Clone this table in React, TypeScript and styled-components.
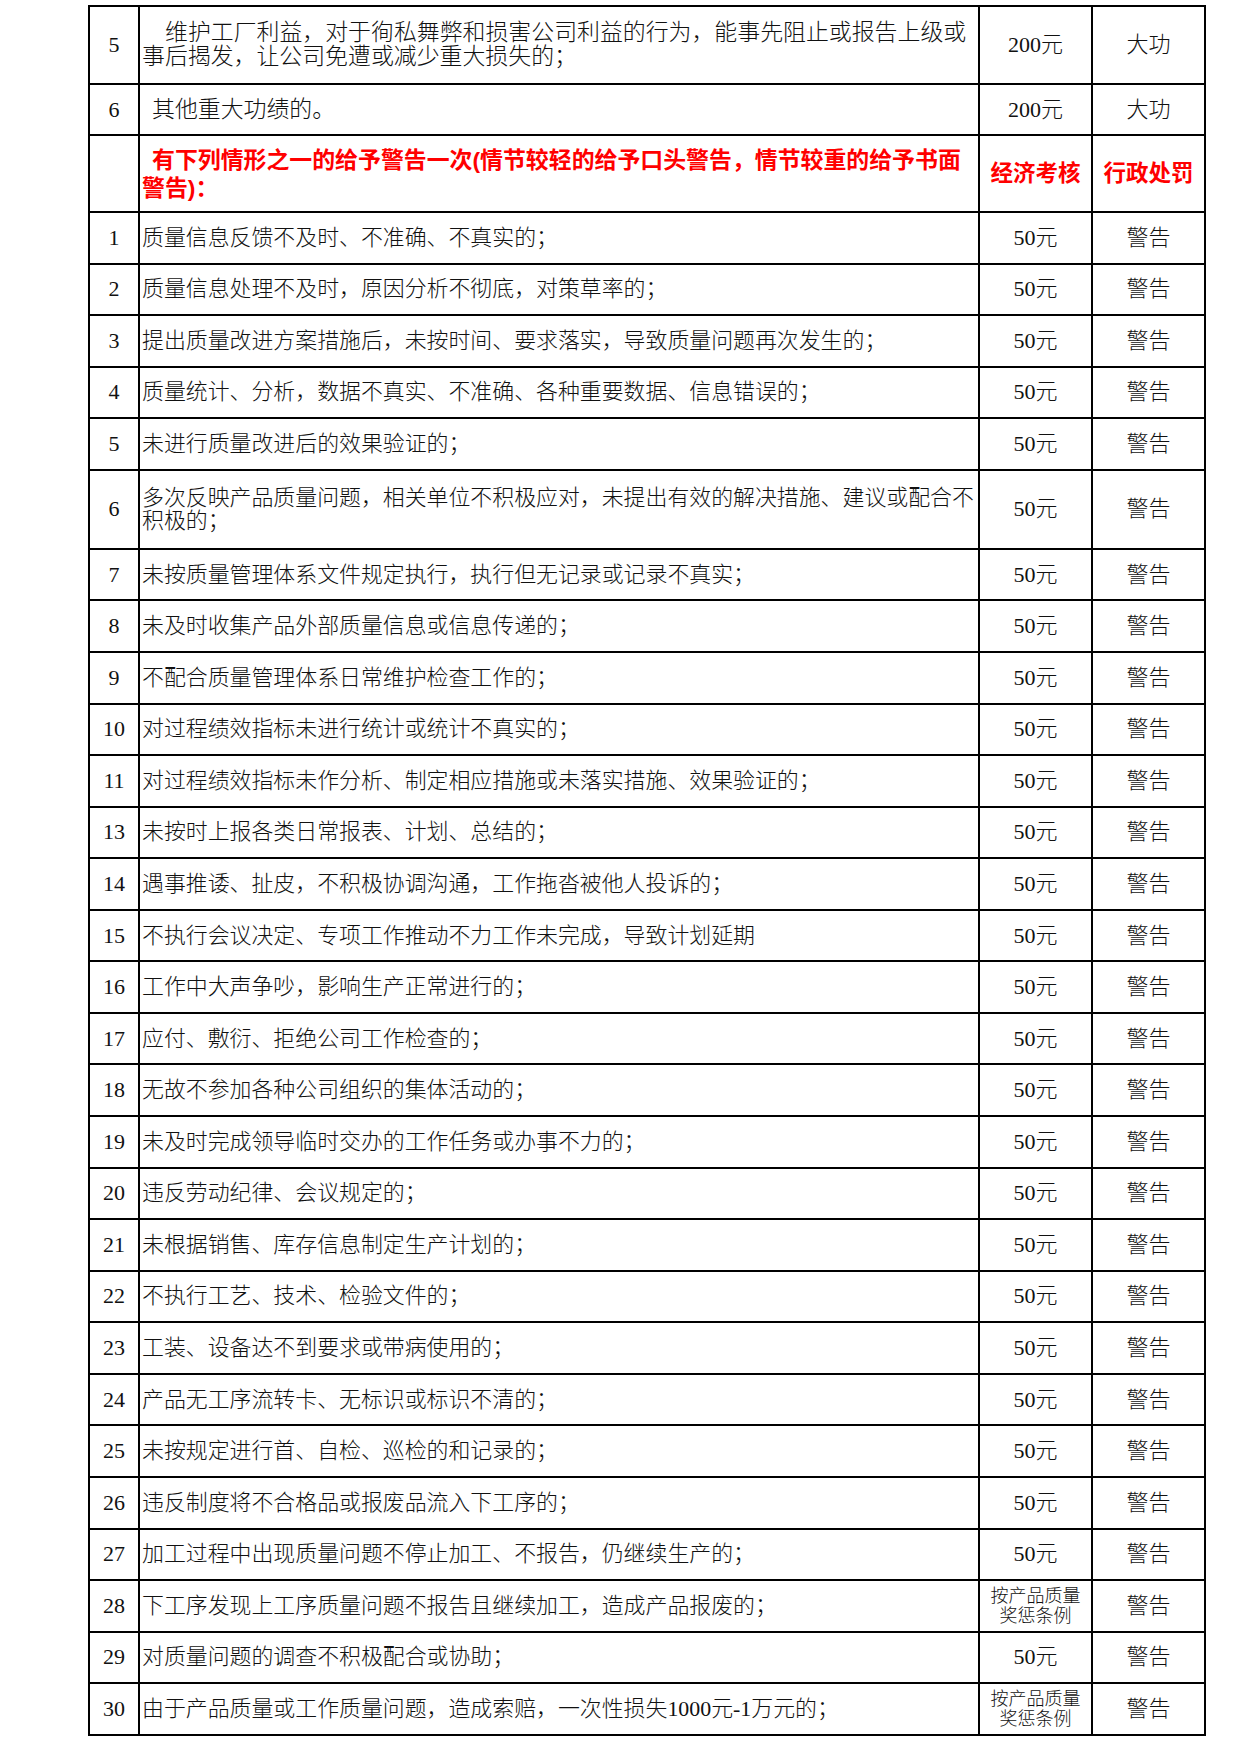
import React from "react";
import styled, { createGlobalStyle } from "styled-components";

const GlobalStyle = createGlobalStyle`
  html, body {
    margin: 0;
    padding: 0;
    background: #ffffff;
  }
  body {
    font-family: "Liberation Serif", "Noto Sans CJK SC", serif;
    color: #111111;
  }
`;

const Page = styled.div`
  padding: 5px 0 0 88px;
`;

const Sheet = styled.table`
  border-collapse: collapse;
  table-layout: fixed;
  width: 1116px;
`;

const Row = styled.tr<{ $h: number }>`
  height: ${(p) => p.$h}px;
`;

const Cell = styled.td`
  border: 2px solid #000000;
  padding: 0;
  vertical-align: middle;
  overflow: hidden;
`;

const NumCell = styled(Cell)`
  text-align: center;
  font-family: "Liberation Serif", "Noto Sans CJK SC", serif;
  font-size: 22px;
  color: #111111;
`;

const TextCell = styled(Cell)<{
  $size?: number;
  $indent?: number;
  $lh?: number;
  $red?: boolean;
}>`
  padding: 0 0 0 2px;
  white-space: nowrap;
  text-align: left;
  font-family: ${(p) =>
    p.$red
      ? `"Liberation Sans", "Noto Sans CJK SC", sans-serif`
      : `"Liberation Serif", "Noto Sans CJK SC", serif`};
  font-weight: ${(p) => (p.$red ? 700 : 300)};
  font-size: ${(p) => p.$size ?? 21.9}px;
  line-height: ${(p) => p.$lh ?? 24}px;
  text-indent: ${(p) => p.$indent ?? 0}px;
  color: ${(p) => (p.$red ? "#ff0000" : "#111111")};
`;

const NextLine = styled.span`
  display: inline-block;
  text-indent: 0;
`;

const CenterCell = styled(Cell)<{ $red?: boolean; $small?: boolean }>`
  text-align: center;
  white-space: nowrap;
  font-family: ${(p) =>
    p.$red
      ? `"Liberation Sans", "Noto Sans CJK SC", sans-serif`
      : `"Liberation Serif", "Noto Sans CJK SC", serif`};
  font-weight: ${(p) => (p.$red ? 700 : 300)};
  font-size: ${(p) => (p.$red ? 22.5 : p.$small ? 18 : 22)}px;
  line-height: ${(p) => (p.$small ? 20 : 26)}px;
  color: ${(p) => (p.$red ? "#ff0000" : "#111111")};
`;

type Item = {
  no: string;
  lines: string[];
  amount?: string[];
  tall?: boolean;
};

const items: Item[] = [
  { no: "1", lines: ["质量信息反馈不及时、不准确、不真实的；"] },
  { no: "2", lines: ["质量信息处理不及时，原因分析不彻底，对策草率的；"] },
  { no: "3", lines: ["提出质量改进方案措施后，未按时间、要求落实，导致质量问题再次发生的；"] },
  { no: "4", lines: ["质量统计、分析，数据不真实、不准确、各种重要数据、信息错误的；"] },
  { no: "5", lines: ["未进行质量改进后的效果验证的；"] },
  {
    no: "6",
    lines: ["多次反映产品质量问题，相关单位不积极应对，未提出有效的解决措施、建议或配合不", "积极的；"],
    tall: true,
  },
  { no: "7", lines: ["未按质量管理体系文件规定执行，执行但无记录或记录不真实；"] },
  { no: "8", lines: ["未及时收集产品外部质量信息或信息传递的；"] },
  { no: "9", lines: ["不配合质量管理体系日常维护检查工作的；"] },
  { no: "10", lines: ["对过程绩效指标未进行统计或统计不真实的；"] },
  { no: "11", lines: ["对过程绩效指标未作分析、制定相应措施或未落实措施、效果验证的；"] },
  { no: "13", lines: ["未按时上报各类日常报表、计划、总结的；"] },
  { no: "14", lines: ["遇事推诿、扯皮，不积极协调沟通，工作拖沓被他人投诉的；"] },
  { no: "15", lines: ["不执行会议决定、专项工作推动不力工作未完成，导致计划延期"] },
  { no: "16", lines: ["工作中大声争吵，影响生产正常进行的；"] },
  { no: "17", lines: ["应付、敷衍、拒绝公司工作检查的；"] },
  { no: "18", lines: ["无故不参加各种公司组织的集体活动的；"] },
  { no: "19", lines: ["未及时完成领导临时交办的工作任务或办事不力的；"] },
  { no: "20", lines: ["违反劳动纪律、会议规定的；"] },
  { no: "21", lines: ["未根据销售、库存信息制定生产计划的；"] },
  { no: "22", lines: ["不执行工艺、技术、检验文件的；"] },
  { no: "23", lines: ["工装、设备达不到要求或带病使用的；"] },
  { no: "24", lines: ["产品无工序流转卡、无标识或标识不清的；"] },
  { no: "25", lines: ["未按规定进行首、自检、巡检的和记录的；"] },
  { no: "26", lines: ["违反制度将不合格品或报废品流入下工序的；"] },
  { no: "27", lines: ["加工过程中出现质量问题不停止加工、不报告，仍继续生产的；"] },
  {
    no: "28",
    lines: ["下工序发现上工序质量问题不报告且继续加工，造成产品报废的；"],
    amount: ["按产品质量", "奖惩条例"],
  },
  { no: "29", lines: ["对质量问题的调查不积极配合或协助；"] },
  {
    no: "30",
    lines: ["由于产品质量或工作质量问题，造成索赔，一次性损失1000元-1万元的；"],
    amount: ["按产品质量", "奖惩条例"],
  },
];

const Lines = ({ lines }: { lines: string[] }) => (
  <>
    {lines.map((l, i) => (
      <React.Fragment key={i}>
        {i > 0 && <br />}
        {l}
      </React.Fragment>
    ))}
  </>
);

export default function App() {
  return (
    <>
      <GlobalStyle />
      <Page>
        <Sheet>
          <colgroup>
            <col style={{ width: 50 }} />
            <col style={{ width: 840 }} />
            <col style={{ width: 113 }} />
            <col style={{ width: 113 }} />
          </colgroup>
          <tbody>
            <Row $h={78}>
              <NumCell>5</NumCell>
              <TextCell $size={22.9} $indent={23} $lh={24}>
                维护工厂利益，对于徇私舞弊和损害公司利益的行为，能事先阻止或报告上级或
                <br />
                <NextLine>事后揭发，让公司免遭或减少重大损失的；</NextLine>
              </TextCell>
              <CenterCell>200元</CenterCell>
              <CenterCell>大功</CenterCell>
            </Row>
            <Row $h={51}>
              <NumCell>6</NumCell>
              <TextCell $size={22.9} $indent={10}>
                其他重大功绩的。
              </TextCell>
              <CenterCell>200元</CenterCell>
              <CenterCell>大功</CenterCell>
            </Row>
            <Row $h={77}>
              <NumCell />
              <TextCell $red $size={22.9} $indent={10} $lh={28}>
                有下列情形之一的给予警告一次(情节较轻的给予口头警告，情节较重的给予书面
                <br />
                <NextLine>警告)：</NextLine>
              </TextCell>
              <CenterCell $red>经济考核</CenterCell>
              <CenterCell $red>行政处罚</CenterCell>
            </Row>
            {items.map((it) => (
              <Row key={it.no} $h={it.tall ? 79 : 51.57}>
                <NumCell>{it.no}</NumCell>
                <TextCell $lh={it.tall ? 23 : 24}>
                  <Lines lines={it.lines} />
                </TextCell>
                {it.amount ? (
                  <CenterCell $small>
                    <Lines lines={it.amount} />
                  </CenterCell>
                ) : (
                  <CenterCell>50元</CenterCell>
                )}
                <CenterCell>警告</CenterCell>
              </Row>
            ))}
          </tbody>
        </Sheet>
      </Page>
    </>
  );
}
